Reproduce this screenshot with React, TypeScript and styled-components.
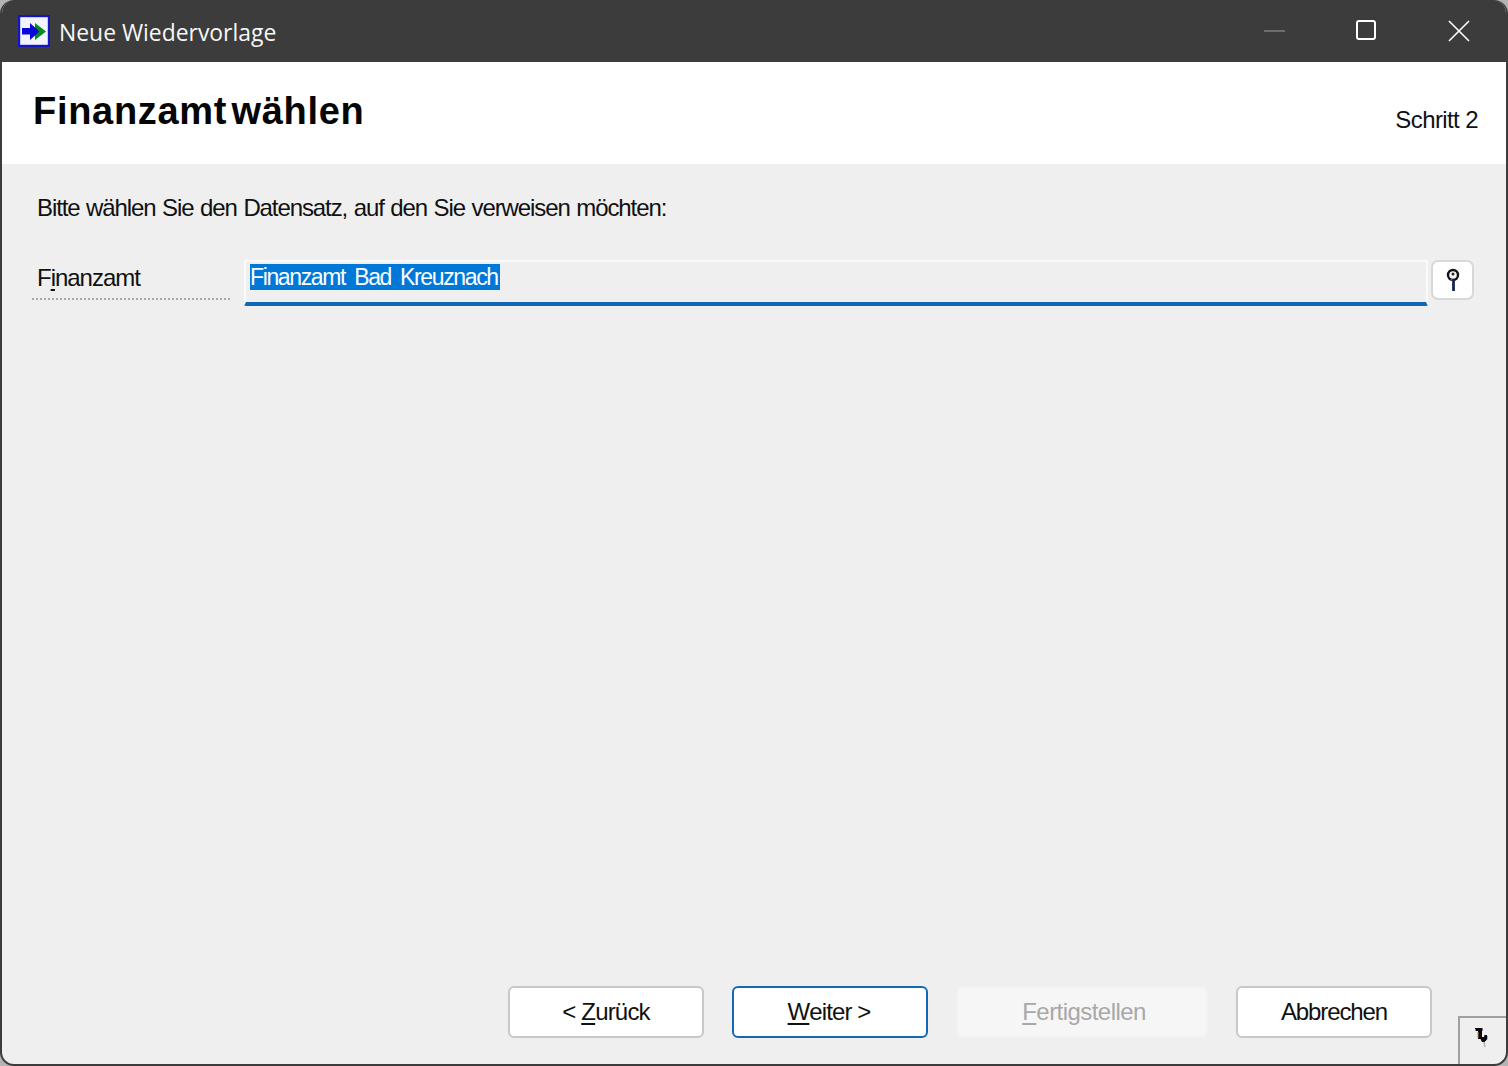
import styled, { createGlobalStyle } from "styled-components";

const GlobalStyle = createGlobalStyle`
  html, body {
    margin: 0;
    padding: 0;
    background: #b4b4b4;
  }
  * {
    box-sizing: border-box;
  }
`;

function AppIcon() {
  return (
    <svg width="32" height="32" viewBox="0 0 32 32">
      <rect x="1" y="1" width="30" height="30" fill="#f2f4ff" stroke="#1414c4" strokeWidth="2.400" />
      <path d="M17 8l11 8.500L17 25z" fill="#0a8a1e" />
      <path d="M4 13h8V8l9.500 8.500L12 25v-5.500H4z" fill="#0808d8" />
    </svg>
  );
}

function MinimizeIcon() {
  return (
    <svg width="22" height="22" viewBox="0 0 22 22">
      <path d="M0 11h21" stroke="#6e6e6e" strokeWidth="2" />
    </svg>
  );
}

function MaximizeIcon() {
  return (
    <svg width="22" height="22" viewBox="0 0 22 22">
      <rect x="1" y="1" width="18" height="18" rx="2" fill="none" stroke="#fff" strokeWidth="2" />
    </svg>
  );
}

function CloseIcon() {
  return (
    <svg width="22" height="22" viewBox="0 0 22 22">
      <path d="M1 1l20 20M21 1L1 21" stroke="#fff" strokeWidth="1.600" />
    </svg>
  );
}

function LookupIcon() {
  return (
    <svg width="14" height="24" viewBox="0 0 14 24">
      <circle cx="7" cy="7" r="5" fill="#f4f4f4" stroke="#15121c" strokeWidth="2.400" />
      <circle cx="7" cy="6" r="1.500" fill="#2a2a2a" />
      <path d="M5 11l2 2" stroke="#a3552a" strokeWidth="1.500" />
      <path d="M7.500 12v11" stroke="#16264a" strokeWidth="2.800" />
    </svg>
  );
}

function PinIcon() {
  return (
    <svg width="14" height="20" viewBox="0 0 14 20">
      <path d="M0 0h7.500v3H7v6h2l.5-2H12v4.500L9.500 14H7l-1.500-3H3V3H0z" fill="#07070f" />
      <path d="M.5 1v2M3 4v6" stroke="#c98a3a" strokeWidth="1" />
      <path d="M12.500 8v3" stroke="#7db4dc" strokeWidth="1" />
      <path d="M9 14l1 5" stroke="#a9b4bc" strokeWidth="1.500" />
    </svg>
  );
}

function App() {
  return (
    <>
      <GlobalStyle />
      <Window>
        <TitleBar>
          <AppIcon />
          <TitleText>Neue Wiedervorlage</TitleText>
          <WindowControls>
            <ControlSlot><MinimizeIcon /></ControlSlot>
            <ControlSlot><MaximizeIcon /></ControlSlot>
            <ControlSlot><CloseIcon /></ControlSlot>
          </WindowControls>
        </TitleBar>
        <Header>
          <HeaderTitle>Finanzamt wählen</HeaderTitle>
          <StepLabel>Schritt 2</StepLabel>
        </Header>
        <Content>
          <Prompt>Bitte wählen Sie den Datensatz, auf den Sie verweisen möchten:</Prompt>
          <FieldRow>
            <FieldLabel>F<u>i</u>nanzamt</FieldLabel>
            <FieldInput>
              <Selected>Finanzamt Bad Kreuznach</Selected>
            </FieldInput>
            <LookupButton><LookupIcon /></LookupButton>
          </FieldRow>
        </Content>
        <Footer>
          <WizardButton $width={196} $tracking={-0.8}>&lt; <u>Z</u>urück</WizardButton>
          <WizardButton $width={196} $tracking={-0.9} $focused>
            <u>W</u>eiter &gt;
          </WizardButton>
          <WizardButton $width={252} $tracking={-0.55} $disabled>
            <u>F</u>ertigstellen
          </WizardButton>
          <WizardButton $width={196} $tracking={-1.1}>Abbrechen</WizardButton>
        </Footer>
        <PinCorner><PinIcon /></PinCorner>
      </Window>
    </>
  );
}

const Window = styled.div`
  position: relative;
  width: 1508px;
  height: 1066px;
  display: flex;
  flex-direction: column;
  background: #efefef;
  border: 2px solid #3c3c3c;
  border-top: none;
  border-radius: 14px;
  overflow: hidden;
  font-family: "Liberation Sans", Arial, sans-serif;
  color: #111;
`;

const TitleBar = styled.div`
  height: 62px;
  flex: none;
  display: flex;
  align-items: center;
  background: #3c3c3c;
  padding-left: 16px;
`;

const TitleText = styled.span`
  margin: 2px 0 0 9px;
  font-family: "Open Sans", "Noto Sans", sans-serif;
  font-size: 22.9px;
  color: #f7f7f7;
`;

const WindowControls = styled.div`
  margin-left: auto;
  display: flex;
  padding-right: 1px;
`;

const ControlSlot = styled.div`
  width: 92px;
  height: 62px;
  display: flex;
  align-items: center;
  justify-content: center;
  padding-bottom: 1px;
`;

const Header = styled.div`
  height: 102px;
  flex: none;
  display: flex;
  justify-content: space-between;
  background: #fff;
  padding: 0 28px 0 31px;
`;

const HeaderTitle = styled.h1`
  margin: 28px 0 0;
  font-size: 38px;
  line-height: 42px;
  font-weight: 700;
  letter-spacing: 0.7px;
  word-spacing: -7px;
  color: #050505;
`;

const StepLabel = styled.span`
  margin-top: 44px;
  font-size: 24px;
  line-height: 28px;
  letter-spacing: -0.6px;
`;

const Content = styled.div`
  flex: 1;
  display: flex;
  flex-direction: column;
  padding: 30px 32px 0 30px;
`;

const Prompt = styled.p`
  margin: 0 0 0 5px;
  font-size: 24px;
  line-height: 28px;
  letter-spacing: -1.1px;
  word-spacing: 1px;
`;

const FieldRow = styled.div`
  margin-top: 38px;
  display: flex;
  align-items: flex-start;
`;

const FieldLabel = styled.label`
  width: 198px;
  height: 40px;
  margin-right: 14px;
  padding: 4px 0 0 5px;
  font-size: 24px;
  line-height: 28px;
  letter-spacing: -1.03px;
  border-bottom: 2px dotted #a8a8a8;

  u {
    text-underline-offset: 3px;
  }
`;

const FieldInput = styled.div`
  width: 1184px;
  height: 46px;
  padding: 2px 4px 0;
  background: #efefef;
  border: 2px solid #fafafa;
  border-bottom: 4px solid #0f67b5;
  border-radius: 2px;
  font-size: 23px;
  line-height: 26px;
`;

const Selected = styled.span`
  display: inline-block;
  height: 26px;
  padding-right: 2px;
  background: #0078d7;
  color: #fff;
  letter-spacing: -1.36px;
  word-spacing: 4px;
`;

const LookupButton = styled.div`
  width: 43px;
  height: 40px;
  margin-left: 3px;
  display: flex;
  align-items: center;
  justify-content: center;
  background: #fff;
  border: 2px solid #d8d8d8;
  border-radius: 7px;
`;

const Footer = styled.div`
  flex: none;
  display: flex;
  justify-content: flex-end;
  gap: 28px;
  padding: 0 74px 26px 0;
`;

const WizardButton = styled.div<{
  $width: number;
  $tracking: number;
  $focused?: boolean;
  $disabled?: boolean;
}>`
  width: ${(p) => p.$width}px;
  height: 52px;
  display: flex;
  align-items: center;
  justify-content: center;
  white-space: pre;
  font-size: 24px;
  letter-spacing: ${(p) => p.$tracking}px;
  padding-left: ${(p) => (p.$disabled ? 4 : 0)}px;
  padding-right: ${(p) => (p.$focused ? 2 : 0)}px;
  border-radius: 6px;
  background: ${(p) => (p.$disabled ? "#f6f6f6" : "#fff")};
  border: 2px solid ${(p) => (p.$focused ? "#1369b4" : p.$disabled ? "#f2f2f2" : "#c8c8c8")};
  color: ${(p) => (p.$disabled ? "#a8a8a8" : "#111")};

  u {
    text-underline-offset: 3px;
  }
`;

const PinCorner = styled.div`
  position: absolute;
  right: 0;
  bottom: 0;
  width: 48px;
  height: 48px;
  display: flex;
  align-items: center;
  justify-content: center;
  border: 2px solid #a0a0a0;
  border-right: none;
  border-bottom: none;
  padding: 0 2px 6px 0;
`;

export default App;
